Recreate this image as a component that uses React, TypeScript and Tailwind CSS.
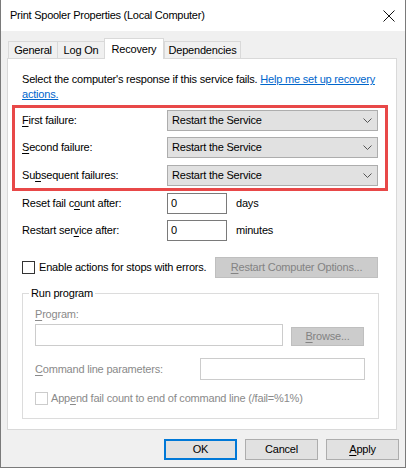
import React from "react";

const U = ({ children }: { children: React.ReactNode }) => (
  <span className="underline underline-offset-[2px]">{children}</span>
);

function Chevron() {
  return (
    <svg width="9" height="5" viewBox="0 0 9 5" className="shrink-0">
      <path d="M0.5 0.5 L4.5 4.5 L8.5 0.5" fill="none" stroke="#555" strokeWidth="1" />
    </svg>
  );
}

function Dropdown() {
  return (
    <div className="flex h-[21px] w-[211px] items-center justify-between border border-[#adadad] bg-[#e1e1e1] pl-[4px] pr-[5px]">
      <span>Restart the Service</span>
      <Chevron />
    </div>
  );
}

function Tab({ label, w, selected }: { label: string; w: string; selected?: boolean }) {
  if (selected) {
    return (
      <div
        className={`relative z-10 -mb-[1px] flex h-[21px] items-center justify-center border-x border-t border-[#d9d9d9] bg-white ${w}`}
      >
        {label}
      </div>
    );
  }
  return (
    <div className={`flex h-[17px] items-center justify-center border-l border-t border-[#d9d9d9] bg-[#f0f0f0] ${w}`}>
      {label}
    </div>
  );
}

export default function App() {
  return (
    <div className="flex h-[468px] w-[406px] flex-col border-x border-b border-[#7a7a7a] bg-[#f0f0f0] font-['Liberation_Sans',Arial,sans-serif] text-[11px] tracking-[-0.2px] text-black">
      {/* Title bar */}
      <div className="flex h-[31px] shrink-0 items-center justify-between bg-white pl-[9px] pr-[10px]">
        <span className="text-[11px] tracking-[-0.25px]">Print Spooler Properties (Local Computer)</span>
        <svg width="12" height="12" viewBox="0 0 12 12">
          <path d="M0.5 0.5 L11.5 11.5 M11.5 0.5 L0.5 11.5" stroke="#111" strokeWidth="1" />
        </svg>
      </div>

      {/* Tabs */}
      <div className="ml-[7px] mt-[7px] flex items-end">
        <Tab label="General" w="w-[49px]" />
        <Tab label="Log On" w="w-[47px]" />
        <Tab label="Recovery" w="w-[60px]" selected />
        <div className="flex h-[17px] w-[77px] items-center justify-center border-x border-t border-[#d9d9d9] bg-[#f0f0f0]">
          Dependencies
        </div>
      </div>

      {/* Panel */}
      <div className="ml-[6px] h-[372px] w-[390px] border border-[#d9d9d9] bg-white">
        <p className="ml-[14px] mt-[13px] leading-[15px]">
          Select the computer's response if this service fails.{" "}
          <span className="text-[#0066cc] underline">
            Help me set up recovery
            <br />
            actions.
          </span>
        </p>

        {/* Highlighted box */}
        <div className="ml-[4px] mt-[3px] flex w-[376px] flex-col border-[3px] border-[#e84848] pb-[2px] pl-[7px] pt-[2px]">
          <div className="flex items-center">
            <span className="w-[145px]">
              <U>F</U>irst failure:
            </span>
            <Dropdown />
          </div>
          <div className="mt-[6px] flex items-center">
            <span className="w-[145px]">
              <U>S</U>econd failure:
            </span>
            <Dropdown />
          </div>
          <div className="mt-[7px] flex items-center">
            <span className="w-[145px]">
              Su<U>b</U>sequent failures:
            </span>
            <Dropdown />
          </div>
        </div>

        {/* Reset / restart */}
        <div className="ml-[14px] mt-[2px] flex items-center">
          <span className="w-[145px]">
            Reset fail c<U>o</U>unt after:
          </span>
          <div className="flex h-[21px] w-[60px] items-center border border-[#7a7a7a] pl-[3px]">0</div>
          <span className="ml-[9px]">days</span>
        </div>
        <div className="ml-[14px] mt-[6px] flex items-center">
          <span className="w-[145px]">
            Restart ser<U>v</U>ice after:
          </span>
          <div className="flex h-[21px] w-[60px] items-center border border-[#7a7a7a] pl-[3px]">0</div>
          <span className="ml-[9px]">minutes</span>
        </div>

        {/* Enable actions */}
        <div className="ml-[14px] mt-[16px] flex w-[356px] items-center justify-between">
          <div className="flex items-center">
            <div className="h-[13px] w-[13px] border border-[#333]" />
            <span className="ml-[4px]">Enable actions for stops with errors.</span>
          </div>
          <div className="flex h-[21px] w-[163px] items-center justify-center border border-[#bfbfbf] bg-[#cccccc] text-[#838383]">
            <span>
              <U>R</U>estart Computer Options...
            </span>
          </div>
        </div>

        {/* Run program group */}
        <fieldset className="ml-[14px] mt-[8px] w-[357px] border border-[#dcdcdc] pb-[11px]">
          <legend className="ml-[6px] px-[2px] leading-[15px]">Run program</legend>
          <div className="ml-[12px] mt-[6px] leading-[15px] text-[#8a8a8a]">
            <U>P</U>rogram:
          </div>
          <div className="ml-[12px] mt-[2px] flex items-end">
            <div className="h-[22px] w-[248px] border border-[#cccccc] bg-white" />
            <div className="ml-[8px] flex h-[19px] w-[73px] items-center justify-center border border-[#bfbfbf] bg-[#cccccc] text-[#838383]">
              <span>
                <U>B</U>rowse...
              </span>
            </div>
          </div>
          <div className="ml-[12px] mt-[12px] flex items-center">
            <span className="w-[165px] text-[#8a8a8a]">
              <U>C</U>ommand line parameters:
            </span>
            <div className="h-[22px] w-[165px] border border-[#cccccc] bg-white" />
          </div>
          <div className="ml-[12px] mt-[10px] flex items-center">
            <div className="h-[13px] w-[13px] border border-[#cccccc] bg-white" />
            <span className="ml-[3px] text-[#8a8a8a]">
              App<U>e</U>nd fail count to end of command line (/fail=%1%)
            </span>
          </div>
        </fieldset>
      </div>

      {/* Buttons */}
      <div className="mt-[9px] flex justify-end gap-[8px] pr-[6px]">
        <div className="flex h-[21px] w-[73px] items-center justify-center border-2 border-[#0078d7] bg-[#e1e1e1]">
          OK
        </div>
        <div className="flex h-[21px] w-[73px] items-center justify-center border border-[#adadad] bg-[#e1e1e1]">
          Cancel
        </div>
        <div className="flex h-[21px] w-[73px] items-center justify-center border border-[#adadad] bg-[#e1e1e1]">
          <span>
            <U>A</U>pply
          </span>
        </div>
      </div>
    </div>
  );
}
